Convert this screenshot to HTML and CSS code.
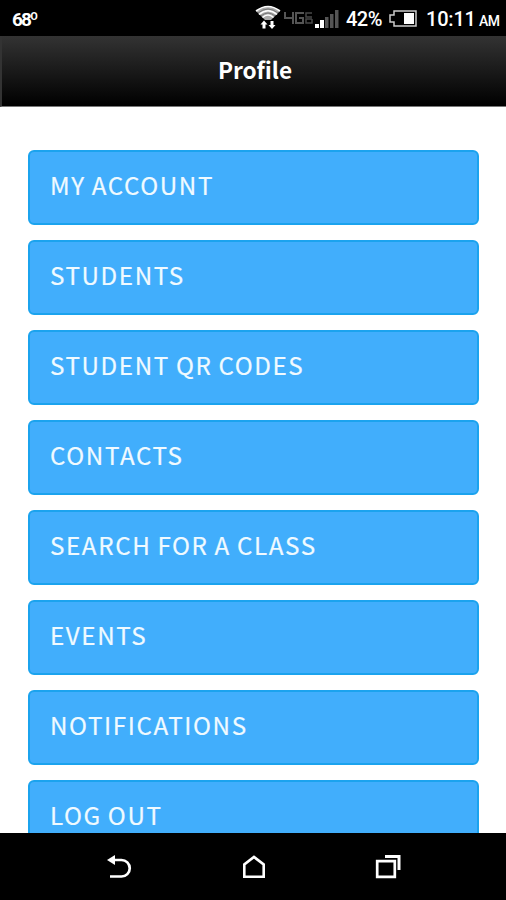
FILE: index.html
```html
<!DOCTYPE html>
<html lang="en">
<head>
  <meta charset="UTF-8">
  <meta name="viewport" content="width=device-width, initial-scale=1">
  <title>Profile</title>
  <link rel="stylesheet" href="styles.css">
</head>
<body>
  <div class="phone">

    <!-- STATUS BAR -->
    <div class="status-bar">
      <span class="temp">68º</span>
      <svg class="wifi" width="26" height="26" viewBox="0 0 26 26">
        <path d="M1 6Q13-3 25 6L16 15H10Z" fill="#aaa"/>
        <path d="M1 6Q13-3 25 6M4 9.500Q13 2 22 9.500M7.500 12.500Q13 7.500 18.500 12.500" fill="none" stroke="#fff" stroke-width="1.600"/>
        <path d="M3 8Q13 0 23 8M6 11Q13 5 20 11" fill="none" stroke="#777" stroke-width="1"/>
        <path d="M9 15.500L12.500 19.500H10.500V23.500H7.500V19.500H5.500ZM17 24L13.500 20H15.500V16H18.500V20H20.500Z" fill="#fff"/>
      </svg>
      <svg class="network" width="29" height="13" viewBox="0 0 29 13">
        <path d="M1 0V6H9M9 0V12M20 1H12V11H19V6H15" fill="none" stroke="#555" stroke-width="2"/>
        <path d="M28 1H22V5H28M28 7H22V11H28V7" fill="none" stroke="#484848" stroke-width="1.500"/>
      </svg>
      <svg class="signal" width="24" height="18" viewBox="0 0 24 18">
        <path d="M0 14H4V18H0ZM5 10H9V18H5Z" fill="#fff"/>
        <path d="M10 7H13.500V18H10ZM15 4H18.500V18H15ZM20 0H23.500V18H20Z" fill="#555"/>
      </svg>
      <span class="percent">42%</span>
      <svg class="battery" width="28" height="17" viewBox="0 0 28 17">
        <path d="M5 1H27V16H5V12H1V5H5Z" fill="none" stroke="#ccc" stroke-width="1.500"/>
        <path d="M15 3H25V14H15Z" fill="#fff"/>
      </svg>
      <span class="clock">10:11</span>
      <span class="ampm">AM</span>
    </div>

    <header class="title-bar">
      <h1>Profile</h1>
    </header>

    <!-- MENU -->
    <main class="menu">
      <a href="#" class="menu-item">MY ACCOUNT</a>
      <a href="#" class="menu-item">STUDENTS</a>
      <a href="#" class="menu-item">STUDENT QR CODES</a>
      <a href="#" class="menu-item">CONTACTS</a>
      <a href="#" class="menu-item">SEARCH FOR A CLASS</a>
      <a href="#" class="menu-item">EVENTS</a>
      <a href="#" class="menu-item">NOTIFICATIONS</a>
      <a href="#" class="menu-item">LOG OUT</a>
    </main>

    <!-- NAVIGATION BAR -->
    <nav class="nav-bar">
      <svg width="26" height="24" viewBox="0 0 26 24">
        <path d="M8 5H15.500A8 8 0 0 1 15.500 21.500H4" fill="none" stroke="#fff" stroke-width="2.700"/>
        <path d="M1 5L9 0V10Z" fill="#fff"/>
      </svg>
      <svg width="26" height="24" viewBox="0 0 26 24">
        <path d="M3.300 21.700V9.500L13 2L22.700 9.500V21.700Z" fill="none" stroke="#fff" stroke-width="2.600"/>
      </svg>
      <svg width="26" height="24" viewBox="0 0 26 24">
        <path d="M2.200 6.200H19.800V21.800H2.200Z" fill="none" stroke="#fff" stroke-width="2.700"/>
        <path d="M10 1.500H24V15" fill="none" stroke="#fff" stroke-width="3"/>
      </svg>
    </nav>

  </div>
</body>
</html>
```
FILE: styles.css
```css
* { margin: 0; padding: 0; box-sizing: border-box; }
body { background: #fff; color: #fff; overflow: hidden; }
svg { display: block; flex-shrink: 0; }

.phone {
  width: 506px;
  height: 900px;
  display: flex;
  flex-direction: column;
  overflow: hidden;
}

/* STATUS BAR */
.status-bar {
  height: 36px;
  flex-shrink: 0;
  background: #000;
  display: flex;
  align-items: flex-start;
  padding-left: 12px;
  font-family: Roboto, sans-serif;
  font-weight: 500;
  font-size: 20px;
  line-height: 24px;
  white-space: nowrap;
}
.temp {
  width: 243px;
  padding-top: 8px;
  font-size: 19px;
  font-weight: bold;
  letter-spacing: -2px;
}
.wifi { margin-top: 5px; }
.network { margin: 12px 0 0 3px; }
.signal { margin: 10px 0 0 2px; }
.percent { width: 43px; padding-top: 7px; margin-left: 7px; letter-spacing: -0.5px; }
.battery { margin-top: 10px; }
.clock { width: 53px; padding-top: 7px; margin-left: 9px; letter-spacing: -0.2px; }
.ampm { padding-top: 9px; font-size: 14px; letter-spacing: -0.5px; }

/* TITLE BAR */
.title-bar {
  height: 71px;
  flex-shrink: 0;
  background: linear-gradient(#333, #000);
  border-left: 2px solid #333;
  border-bottom: 1px solid #777;
  display: flex;
  justify-content: center;
}
.title-bar h1 {
  padding-left: 2px;
  font: bold 22.6px/67px "Noto Sans CJK SC", sans-serif;
}

/* MENU */
.menu {
  flex: 1;
  min-height: 0;
  overflow: hidden;
  padding: 42.5px 27px 0 28px;
  display: flex;
  flex-direction: column;
  gap: 14.5px;
}
.menu-item {
  height: 75.5px;
  flex-shrink: 0;
  padding-left: 20px;
  background: #41aefc;
  border: 2px solid #1ba3ee;
  border-radius: 6px;
  color: #f0faff;
  font: 400 24.2px/65px "Noto Sans CJK SC", sans-serif;
  letter-spacing: 1.6px;
  word-spacing: -1px;
  -webkit-text-stroke: 0.2px #f0faff;
  text-decoration: none;
}

/* NAVIGATION BAR */
.nav-bar {
  height: 67px;
  flex-shrink: 0;
  background: #000;
  display: flex;
  justify-content: space-between;
  padding: 22px 105px 0 106px;
}
```
